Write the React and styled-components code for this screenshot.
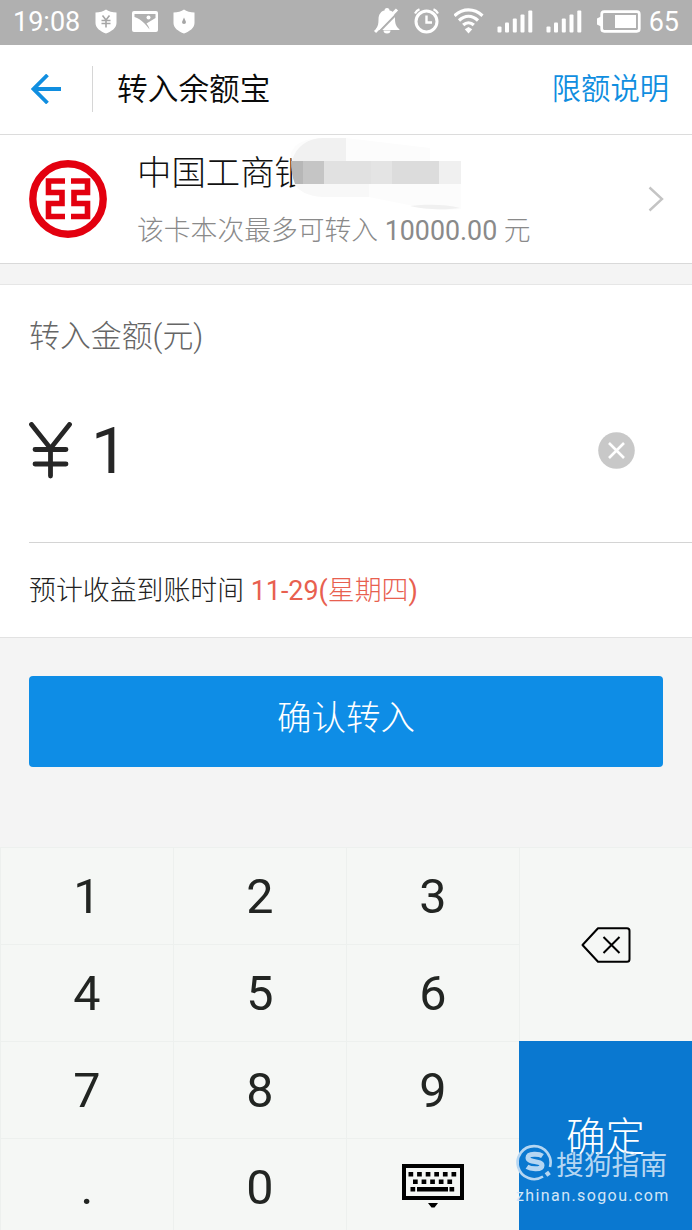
import React from "react";
import styled, { createGlobalStyle, css } from "styled-components";

const GlobalStyle = createGlobalStyle`
  * {
    box-sizing: border-box;
  }
  body {
    margin: 0;
    background: #f4f4f4;
    font-family: Roboto, "Noto Sans CJK SC", sans-serif;
    font-weight: 300;
  }
  svg {
    display: block;
    flex: none;
  }
`;

const keys = ["1", "2", "3", "4", "5", "6", "7", "8", "9", ".", "0"];

//Status bar icons
const Shield = ({ children }) => (
  <svg width="22" height="25" viewBox="0 0 22 25">
    <path
      d="M11 0.5C8.5 2.4 4.5 3.4 0.5 3.6V14c0 5 5 8.5 10.5 10.5C16.5 22.5 21.5 19 21.5 14V3.6C17.5 3.4 13.5 2.4 11 .5z"
      fill="#fff"
    />
    {children}
  </svg>
);

const Signal = () => (
  <svg width="36" height="23" viewBox="0 0 36 23" fill="#fff">
    <rect x="0.5" y="16.5" width="4" height="6" rx="1" />
    <rect x="8" y="12.5" width="4" height="10" rx="1" />
    <rect x="15.8" y="8.5" width="4" height="14" rx="1" />
    <rect x="23.5" y="4.5" width="4" height="18" rx="1" />
    <rect x="31.3" y="0.5" width="4" height="22" rx="1" />
  </svg>
);

const StatusIcons = () => (
  <StatusGroup $gap={13}>
    <svg width="26" height="26" viewBox="0 0 26 26">
      <path
        d="M2 21c2-3 2.500-5.500 2.500-9.500C4.500 6 7.500 3 10.500 2.500a2.500 2.500 0 0 1 5 0c3.500.5 5.500 3.500 5.500 8.500 0 4.500 1 7.500 4.500 10.500v.500H2z"
        fill="#fff"
      />
      <path d="M9.500 22.500a3.500 3 0 0 0 7 0z" fill="#fff" />
      <path d="M3.500 25.500L25 3.500" stroke="#b0b0b0" strokeWidth="2" />
      <path d="M1 24L23 1.500" stroke="#fff" strokeWidth="3" />
    </svg>
    <svg width="28" height="26" viewBox="0 0 28 26" fill="none" stroke="#fff">
      <circle cx="13.5" cy="13.5" r="10.5" strokeWidth="3" />
      <path d="M13.500 7.500v7h5.500" strokeWidth="2.400" />
      <path d="M2 5.500C3 3.500 4.500 2 6.500 1.200M20.500 1.200c2 .8 3.500 2.300 4.500 4.300" strokeWidth="2.200" />
    </svg>
    <svg width="30" height="26" viewBox="0 0 30 26" fill="none" stroke="#fff" strokeWidth="3.2">
      <path d="M.5 7.700C9 0 20 0 28.500 7.700" />
      <path d="M5 12.500C11 7 18 7 24 12.500" />
      <path d="M9.200 17c3.200-3 7.400-3 10.600 0" />
      <path d="M14.500 19l3.700 2.300-3.700 4.200-3.700-4.200z" fill="#fff" stroke="none" />
    </svg>
    <Signal />
    <Signal />
  </StatusGroup>
);

const BankLogo = () => (
  <svg width="78" height="78" viewBox="0 0 78 78" fill="none" stroke="#e3000f">
    <circle cx="39" cy="39" r="35.2" strokeWidth="7.4" />
    <path
      d="M36 21H19.500V32.500H33V43.500H19.500V56.500H36M42 21H58.500V32.500H45V43.500H58.500V56.500H42"
      strokeWidth="5.6"
    />
  </svg>
);

const Mosaic = () => (
  <MosaicSvg width="174" height="74" viewBox="0 0 174 74">
    <path d="M1 16C5 6 16 1 34 1h22l84 10v49L30 58C14 57 6 52 3 45z" fill="#fcfcfc" />
    <path d="M2 24C6 9 18 1 34 1h22v23z" fill="#f1f1f1" />
    <path d="M5 47h74v13L32 60C19 59 9 55 5 47z" fill="#f8f8f8" />
    <path d="M79 47h92v25c-22 2-36 0-52-4L79 60z" fill="#fcfcfc" />
    <path d="M120 69c16 4 34 4 50 2-14-4-34-4-50-2z" fill="#f0f0f0" />
    <path d="M1 24h12v23H5C2 40 1 32 1 24z" fill="#b7b7b7" />
    <path d="M13 24h21v23H13z" fill="#c5c5c5" />
    <path d="M34 24h47v23H34z" fill="#e1e1e1" />
    <path d="M81 24h21v23H81z" fill="#e4e4e4" />
    <path d="M102 24h47v23h-47z" fill="#dcdcdc" />
    <path d="M149 24h22v23h-22z" fill="#f0f0f0" />
  </MosaicSvg>
);

const KeyboardIcon = () => (
  <svg width="62" height="46" viewBox="0 0 62 46">
    <path d="M2 2h58v32H2z" fill="none" stroke="#000" strokeWidth="4" />
    <path
      d="M6.500 10.200H56M11 17.800h41"
      fill="none"
      stroke="#000"
      strokeWidth="4.6"
      strokeDasharray="4.7 3.9"
    />
    <path d="M8.500 23h4.700v4.600H8.500zM15 23h31v4.600H15zM47.500 23h4.700v4.600h-4.700zM26 39h10l-3.500 4.500h-3z" />
  </svg>
);

const App = () => {
  return (
    <Page>
      <GlobalStyle />
      <StatusBar>
        <StatusGroup $gap={15}>
          <Clock>19:08</Clock>
          <Shield>
            <path
              d="M7.500 6.500L11 11l3.500-4.500M6.500 11.500h9M6.500 14.500h9M11 11v7.500"
              fill="none"
              stroke="#a6a6a6"
              strokeWidth="1.6"
            />
          </Shield>
          <svg width="26" height="21" viewBox="0 0 26 21">
            <rect width="26" height="21" rx="2" fill="#fff" />
            <path d="M2.500 3h21v4L14.500 12.500c1.500 2 2.500 3.500 3 6-2-3-4-5-5.500-6.500C9 9 6 7 2.500 6z" fill="#b0b0b0" />
            <circle cx="16.5" cy="6.5" r="2" fill="#fff" />
          </svg>
          <Shield>
            <path d="M11 8.500l2 4.500a2 2 0 1 1-4 0z" fill="#a6a6a6" />
          </Shield>
        </StatusGroup>
        <StatusRight>
          <StatusIcons />
          <svg width="44" height="23" viewBox="0 0 44 23">
            <rect x="4.7" y="1.7" width="37.6" height="19.6" rx="2.5" fill="none" stroke="#fff" strokeWidth="2.7" />
            <path d="M18 5h21v13H18zM0 8.500l4-2v10l-4-2z" fill="#fff" />
          </svg>
          <Battery>65</Battery>
        </StatusRight>
      </StatusBar>

      <Header>
        <svg width="30" height="30" viewBox="0 0 30 30" fill="none" stroke="#108ee0" strokeWidth="3.8">
          <path d="M30 15H2.500M16.500 1L2.500 15l14 14" />
        </svg>
        <Divider />
        <Title>转入余额宝</Title>
        <Limit href="#limit">限额说明</Limit>
      </Header>

      <BankCard>
        <BankLogo />
        <BankInfo>
          <BankName>中国工商银</BankName>
          <BankNote>
            该卡本次最多可转入 <Digits>10000.00</Digits> 元
          </BankNote>
          <Mosaic />
        </BankInfo>
        <svg width="16" height="26" viewBox="0 0 16 26" fill="none" stroke="#c4c4c4" strokeWidth="2.4">
          <path d="M1.500 1.500L14 13 1.500 24.500" />
        </svg>
      </BankCard>

      <AmountPanel>
        <Label>转入金额(元)</Label>
        <AmountRow>
          <svg width="43" height="57" viewBox="0 0 43 57" fill="none" stroke="#262626" strokeWidth="4.8" strokeLinecap="round">
            <path d="M2.500 2.500L21.500 26.500 40.500 2.500M6 27.500h31M6 42h31M21.500 27v27" />
          </svg>
          <Amount>1</Amount>
          <svg width="37" height="37" viewBox="0 0 37 37">
            <circle cx="18.5" cy="18.5" r="18.3" fill="#c8c8c8" />
            <path d="M11 11l15 15M26 11L11 26" stroke="#fff" strokeWidth="2.6" />
          </svg>
        </AmountRow>
        <Arrival>
          预计收益到账时间{" "}
          <ArrivalDate>
            <Digits>11-29(</Digits>星期四<Digits>)</Digits>
          </ArrivalDate>
        </Arrival>
      </AmountPanel>

      <Confirm type="button">确认转入</Confirm>

      <Keypad>
        {keys.map((key) => (
          <Key key={key}>{key}</Key>
        ))}
        <Key>
          <KeyboardIcon />
        </Key>
        <DeleteKey>
          <svg width="50" height="36" viewBox="0 0 50 36" fill="none" stroke="#000" strokeWidth="2" strokeLinejoin="round">
            <path d="M1.500 18L17 1.200H46a2.500 2.500 0 0 1 2.500 2.500v28.600a2.500 2.500 0 0 1-2.500 2.500H17z" />
            <path d="M22.500 10l16 16M38.500 10L22.500 26" />
          </svg>
        </DeleteKey>
        <OkKey>确定</OkKey>
      </Keypad>

      <Watermark>
        <WatermarkBrand>
          <svg width="37" height="38" viewBox="0 0 37 38" fill="none" stroke="#b5d6f2">
            <path d="M27 33.500A16.500 16.500 0 1 1 34 24" strokeWidth="2.6" />
            <path
              d="M26.500 13c-3-2-14.500-3-14.500 1.800 0 5 14 2.700 14 7.700 0 4.500-11 4-15 1.300"
              strokeWidth="5"
            />
            <path d="M30 32l3.500-2.500" strokeWidth="4.5" />
          </svg>
          <span>搜狗指南</span>
        </WatermarkBrand>
        <WatermarkUrl>zhinan.sogou.com</WatermarkUrl>
      </Watermark>
    </Page>
  );
};

//Styled Components
const Page = styled.div`
  position: relative;
  display: flex;
  flex-direction: column;
  width: 692px;
  height: 1230px;
  overflow: hidden;
  background: #f4f4f4;
`;

const Digits = styled.span`
  font-weight: 400;
`;

const StatusBar = styled.div`
  display: flex;
  align-items: center;
  justify-content: space-between;
  height: 45px;
  padding: 0 13px 3px;
  background: #b0b0b0;
  color: white;
`;

const StatusGroup = styled.div`
  display: flex;
  align-items: center;
  gap: ${(props) => props.$gap}px;
`;

const StatusRight = styled(StatusGroup).attrs({ $gap: 15 })``;

const Clock = styled.span`
  padding-top: 2px;
  font-size: 27px;
  font-weight: 400;
  line-height: 42px;
`;

const Battery = styled(Clock)`
  margin-left: -7px;
`;

const Header = styled.header`
  display: flex;
  align-items: center;
  height: 90px;
  padding: 0 23px 2px 31px;
  background: white;
  border-bottom: 1px solid #dcdcdc;
`;

const Divider = styled.div`
  width: 1px;
  height: 46px;
  margin: 0 24px 0 31px;
  background: #d6d6d6;
`;

const Title = styled.h1`
  flex: 1;
  margin: 0;
  padding-bottom: 5px;
  color: #0a0a0a;
  font-size: 30.7px;
  font-weight: 350;
`;

const Limit = styled.a`
  padding-bottom: 5px;
  color: #108ee0;
  font-size: 29.3px;
  font-weight: 350;
  text-decoration: none;
`;

const BankCard = styled.section`
  display: flex;
  height: 129px;
  align-items: center;
  padding: 0 28px 0 29px;
  background: white;
  border-bottom: 1px solid #d9d9d9;
`;

const BankInfo = styled.div`
  position: relative;
  flex: 1;
  height: 128px;
  padding: 15px 0 0 30px;
`;

const BankName = styled.div`
  color: #111;
  font-size: 34.4px;
  line-height: 46px;
`;

const BankNote = styled.div`
  margin-top: 15px;
  color: #8a8a8a;
  font-size: 26.8px;
  line-height: 40px;
`;

//Covers the end of the bank name
const MosaicSvg = styled.svg`
  position: absolute;
  left: 183px;
  top: 2px;
`;

const AmountPanel = styled.section`
  height: 354px;
  margin-top: 20px;
  padding-left: 29px;
  background: white;
  border-top: 1px solid #e6e6e6;
  border-bottom: 1px solid #e2e2e2;
`;

const Label = styled.div`
  padding-top: 31px;
  color: #666;
  font-size: 30.9px;
  line-height: 42px;
`;

const AmountRow = styled.div`
  display: flex;
  align-items: center;
  height: 185px;
  padding: 1px 57px 0 0;
  border-bottom: 1px solid #d4d4d4;
`;

const Amount = styled.div`
  flex: 1;
  padding-left: 19px;
  color: #262626;
  font-size: 65.5px;
  font-weight: 400;
`;

const Arrival = styled.div`
  padding-top: 2px;
  color: #222;
  font-size: 26.9px;
  line-height: 92px;
`;

const ArrivalDate = styled.span`
  color: #e8604f;
`;

const Confirm = styled.button`
  height: 91px;
  margin: 38px 29px 0;
  padding: 0 0 13px;
  border: none;
  border-radius: 4px;
  background: #0e8de6;
  color: white;
  font-family: inherit;
  font-size: 34.5px;
  font-weight: 300;
`;

const Keypad = styled.div`
  display: grid;
  grid-template-columns: repeat(4, 173px);
  grid-template-rows: repeat(4, 97px);
  margin-top: auto;
  height: 383px;
  background: #f5f7f5;
`;

const keyStyle = css`
  display: flex;
  align-items: center;
  justify-content: center;
  border-top: 1px solid #edf0ee;
  border-left: 1px solid #edf0ee;
`;

const Key = styled.div`
  ${keyStyle}
  color: #222522;
  font-size: 48.5px;
  font-weight: 400;
`;

const DeleteKey = styled.div`
  ${keyStyle}
  grid-area: 1 / 4 / 3 / 5;
`;

const OkKey = styled.div`
  ${keyStyle}
  grid-area: 3 / 4 / 5 / 5;
  padding-bottom: 10px;
  border: none;
  background: #0a78d0;
  color: white;
  font-size: 39.5px;
`;

const Watermark = styled.div`
  position: absolute;
  left: 516px;
  top: 1143px;
  color: #b5d6f2;
  font-weight: 400;
`;

const WatermarkBrand = styled.div`
  display: flex;
  align-items: center;
  gap: 3px;
  height: 38px;
  font-size: 27.8px;
  span {
    padding-top: 1px;
  }
`;

const WatermarkUrl = styled.div`
  padding-top: 1px;
  color: #d3e6f7;
  font-size: 16px;
  letter-spacing: 1.4px;
  line-height: 28px;
`;

export default App;
